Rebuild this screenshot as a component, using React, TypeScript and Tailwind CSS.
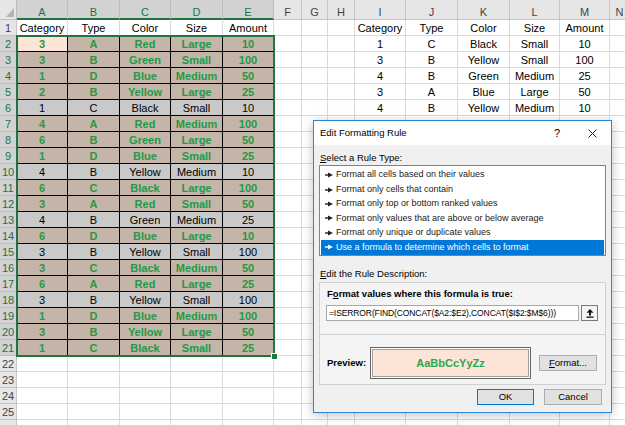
import React from "react";

const colWidths = [17, 51, 52, 51, 52, 51, 28, 26, 27, 51, 52, 52, 50, 50, 20];
const letters = ["", "A", "B", "C", "D", "E", "F", "G", "H", "I", "J", "K", "L", "M", "N"];
const heads = ["Category", "Type", "Color", "Size", "Amount"];

const left: (string | number)[][] = [
  [3, "A", "Red", "Large", 10],
  [3, "B", "Green", "Small", 100],
  [1, "D", "Blue", "Medium", 50],
  [2, "B", "Yellow", "Large", 25],
  [1, "C", "Black", "Small", 10],
  [4, "A", "Red", "Medium", 100],
  [6, "B", "Green", "Large", 50],
  [1, "D", "Blue", "Small", 25],
  [4, "B", "Yellow", "Medium", 10],
  [6, "C", "Black", "Large", 100],
  [3, "A", "Red", "Small", 50],
  [4, "B", "Green", "Medium", 25],
  [6, "D", "Blue", "Large", 10],
  [3, "B", "Yellow", "Small", 100],
  [3, "C", "Black", "Medium", 50],
  [6, "A", "Red", "Large", 25],
  [3, "B", "Yellow", "Small", 100],
  [1, "D", "Blue", "Medium", 100],
  [3, "B", "Yellow", "Large", 50],
  [1, "C", "Black", "Small", 25],
];

const right: (string | number)[][] = [
  [1, "C", "Black", "Small", 10],
  [3, "B", "Yellow", "Small", 100],
  [4, "B", "Green", "Medium", 25],
  [3, "A", "Blue", "Large", 50],
  [4, "B", "Yellow", "Medium", 10],
];

// rows whose values are found in I2:M6 keep the grey fill
const matches = new Set([6, 10, 13, 15, 18]);

function HeaderRow() {
  return (
    <>
      {letters.map((l, c) => {
        if (c === 0) {
          return (
            <div key={c} className="h-[20px] bg-[#e6e6e6] border-r border-b border-[#bdbdbd] flex items-end justify-end pr-[2px] pb-[2px]">
              <svg width="8" height="9" viewBox="0 0 8 9">
                <polygon points="8,0 8,9 0,9" fill="#b4b4b4" />
              </svg>
            </div>
          );
        }
        const sel = c >= 1 && c <= 5;
        return (
          <div
            key={c}
            className={
              sel
                ? "h-[20px] bg-[#d2d2d2] border-r border-[#bdbdbd] border-b-2 border-b-[#217346] text-[#217346] text-[11px] flex justify-center pt-[4px]"
                : "h-[20px] bg-[#e6e6e6] border-r border-b border-[#c6c6c6] text-[#444] text-[11px] flex justify-center pt-[4px]"
            }
          >
            {l}
          </div>
        );
      })}
    </>
  );
}

function Row({ r }: { r: number }) {
  const selRow = r >= 2 && r <= 21;
  const grey = matches.has(r);
  const cells = [];
  for (let c = 0; c < colWidths.length; c++) {
    if (c === 0) {
      cells.push(
        <div
          key={c}
          className={
            selRow
              ? "h-[16px] bg-[#d2d2d2] border-r border-b border-[#bdbdbd] text-[#217346] text-[11px] leading-[16px] text-center"
              : "h-[16px] bg-[#e6e6e6] border-r border-b border-[#c6c6c6] text-[#444] text-[11px] leading-[16px] text-center"
          }
        >
          {r <= 25 ? r : ""}
        </div>
      );
      continue;
    }
    let text: string | number = "";
    let cls = "h-[16px] bg-white border-r border-b border-[#dadada] text-black text-[11px] leading-[16px] text-center whitespace-nowrap overflow-hidden";
    if (r === 1 && c >= 1 && c <= 5) text = heads[c - 1];
    if (r === 1 && c >= 9 && c <= 13) text = heads[c - 9];
    if (r >= 2 && r <= 6 && c >= 9 && c <= 13) text = right[r - 2][c - 9];
    if (selRow && c >= 1 && c <= 5) {
      text = left[r - 2][c - 1];
      if (grey) {
        cls = "h-[16px] bg-[#c9c9c9] border-r border-b border-black text-black text-[11px] leading-[16px] text-center whitespace-nowrap";
      } else if (r === 2 && c === 1) {
        cls = "h-[16px] bg-[#fce4d6] border-r border-b border-black text-[#1f9a48] font-bold text-[11px] leading-[16px] text-center whitespace-nowrap";
      } else {
        cls = "h-[16px] bg-[#c5b4a8] border-r border-b border-black text-[#1f9a48] font-bold text-[11px] leading-[16px] text-center whitespace-nowrap";
      }
    }
    cells.push(
      <div key={c} className={cls}>
        {text}
      </div>
    );
  }
  return <>{cells}</>;
}

function Arrow({ white }: { white?: boolean }) {
  return (
    <svg width="8" height="6" viewBox="0 0 8 6" className="shrink-0">
      <rect x="0" y="2.3" width="4" height="1.4" fill={white ? "#fff" : "#222"} />
      <polygon points="3,0.6 8,3 3,5.4" fill={white ? "#fff" : "#222"} />
    </svg>
  );
}

const rules = [
  "Format all cells based on their values",
  "Format only cells that contain",
  "Format only top or bottom ranked values",
  "Format only values that are above or below average",
  "Format only unique or duplicate values",
  "Use a formula to determine which cells to format",
];

function Dialog() {
  return (
    <div className="absolute left-[313px] top-[120px] w-[299px] border border-[#2b88d8] bg-[#f0f0f0] shadow-[0_2px_10px_rgba(0,0,0,0.25)] font-['Liberation_Sans',Arial,sans-serif] text-black">
      <div className="h-[24px] bg-white flex items-center pl-[6px] pr-[14px] text-[9.5px]">
        <span className="flex-1">Edit Formatting Rule</span>
        <span className="mr-[28px] text-[11px]">?</span>
        <svg width="9" height="9" viewBox="0 0 9 9">
          <path d="M0.5 0.5 L8.5 8.5 M8.5 0.5 L0.5 8.5" stroke="#222" strokeWidth="1" />
        </svg>
      </div>
      <div className="px-[5px] pt-[7px] pb-[7px] flex flex-col">
        <div className="text-[9.5px] leading-[12px] pl-[1px]">
          <span className="underline">S</span>elect a Rule Type:
        </div>
        <div className="mt-[1px] h-[91px] border border-[#828282] bg-white pt-[2px] px-[1px]">
          {rules.map((t, i) => {
            const sel = i === rules.length - 1;
            return (
              <div
                key={t}
                className={
                  sel
                    ? "h-[15px] flex items-center gap-[3px] pl-[4px] bg-[#0078d7] text-white text-[9px] whitespace-nowrap"
                    : "h-[14.4px] flex items-center gap-[3px] pl-[4px] text-[#1a1a1a] text-[9px] whitespace-nowrap"
                }
              >
                <Arrow white={sel} />
                <span>{t}</span>
              </div>
            );
          })}
        </div>
        <div className="mt-[12px] text-[9.5px] leading-[12px] pl-[1px]">
          <span className="underline">E</span>dit the Rule Description:
        </div>
        <div className="mt-[2px] border border-[#d0d0d0] bg-[#f4f4f4] flex flex-col">
          <div className="pt-[5px] pl-[7px] text-[9.5px] leading-[12px] font-bold">
            F<span className="underline">o</span>rmat values where this formula is true:
          </div>
          <div className="mt-[5px] pl-[6px] pr-[7px] flex gap-[2px]">
            <div className="w-[253px] h-[16px] bg-white border border-[#a9a9a9] text-[8.5px] tracking-[-0.1px] leading-[14px] pl-[2px] whitespace-nowrap overflow-hidden">
              =ISERROR(FIND(CONCAT($A2:$E2),CONCAT($I$2:$M$6)))
            </div>
            <div className="w-[17px] h-[16px] bg-[#f3f3f3] border border-[#7a7a7a] flex items-center justify-center">
              <svg width="8" height="9" viewBox="0 0 8 9">
                <polygon points="4,0 7.5,3.8 0.5,3.8" fill="#111" />
                <rect x="3" y="3.5" width="2" height="3" fill="#111" />
                <rect x="0.5" y="7.5" width="7" height="1.3" fill="#111" />
              </svg>
            </div>
          </div>
          <div className="mt-[13px] border-t border-[#d0d0d0] flex items-center pt-[12px] pb-[5px] pl-[7px]">
            <div className="w-[43px] text-[9.5px] font-bold">Preview:</div>
            <div className="w-[161px] h-[32px] border border-[#646464] bg-white p-[1px]">
              <div className="w-full h-full border border-[#a0a0a0] bg-[#fce4d6] flex items-center justify-center text-[11px] font-bold text-[#22aa50]">
                AaBbCcYyZz
              </div>
            </div>
            <div className="ml-[8px] w-[58px] h-[16px] bg-[#e1e1e1] border border-[#adadad] text-[9.5px] flex items-center justify-center">
              <span className="underline">F</span>ormat...
            </div>
          </div>
        </div>
        <div className="mt-[4px] flex justify-end gap-[10px] pr-[4px]">
          <div className="w-[57px] h-[16px] bg-[#e1e1e1] border border-[#0078d7] text-[9.5px] flex items-center justify-center">
            OK
          </div>
          <div className="w-[58px] h-[16px] bg-[#e1e1e1] border border-[#adadad] text-[9.5px] flex items-center justify-center">
            Cancel
          </div>
        </div>
      </div>
    </div>
  );
}

export default function App() {
  const rows = Array.from({ length: 26 }, (_, i) => i + 1);
  return (
    <div className="relative w-[625px] h-[425px] overflow-hidden bg-white font-['Liberation_Sans',Arial,sans-serif]">
      <div className="grid grid-cols-[17px_51px_52px_51px_52px_51px_28px_26px_27px_51px_52px_52px_50px_50px_20px]">
        <HeaderRow />
        {rows.map((r) => (
          <Row key={r} r={r} />
        ))}
      </div>
      {/* selection A2:E21 */}
      <div className="absolute left-[16px] top-[35px] w-[259px] h-[322px] border-2 border-[#217346] pointer-events-none" />
      <div className="absolute left-[271px] top-[353px] w-[7px] h-[7px] bg-[#217346] border border-white" />
      <Dialog />
    </div>
  );
}
